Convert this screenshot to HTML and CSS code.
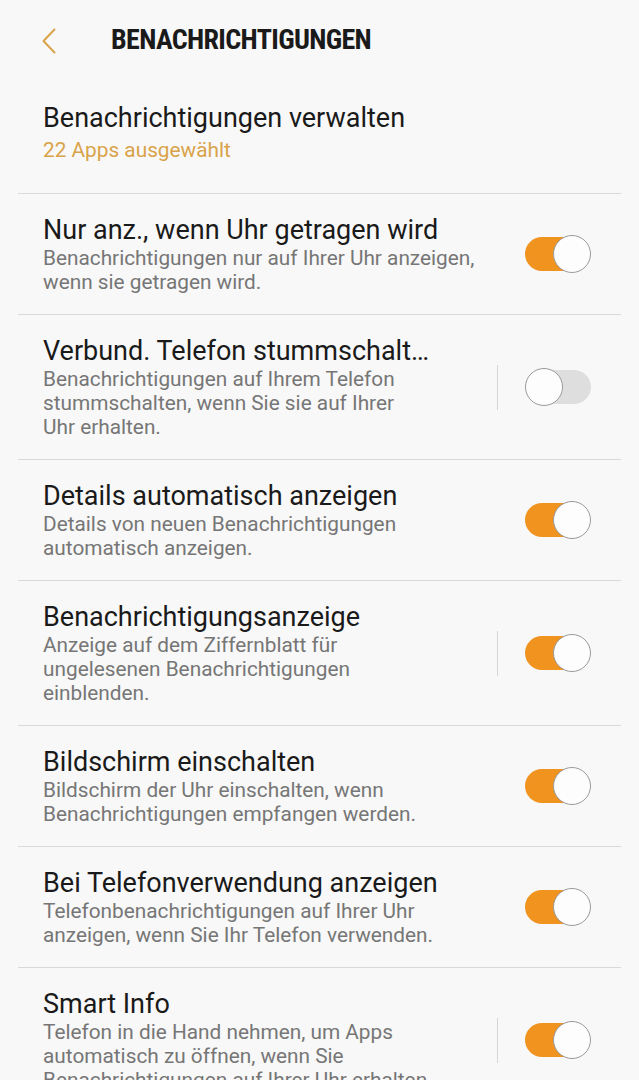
FILE: index.html
```html
<!DOCTYPE html>
<html lang="de">
<head>
<meta charset="utf-8">
<title>Benachrichtigungen</title>
<link rel="stylesheet" href="styles.css">
</head>
<body>
<div class="screen">
  <header class="appbar">
    <span class="back" aria-label="Zurück">
      <svg width="16" height="26" viewBox="0 0 16 26"><polyline points="13.5,1.5 2.5,13 13.5,24.5" fill="none" stroke="#d9a34a" stroke-width="2" stroke-linecap="round" stroke-linejoin="round"/></svg>
    </span>
    <h1 class="appbar-title">BENACHRICHTIGUNGEN</h1>
  </header>

  <ul class="list">
    <li class="row row-first">
      <div class="text">
        <div class="title">Benachrichtigungen verwalten</div>
        <div class="sub sub-accent">22 Apps ausgewählt</div>
      </div>
    </li>
    <li class="row">
      <div class="text">
        <div class="title">Nur anz., wenn Uhr getragen wird</div>
        <div class="sub">Benachrichtigungen nur auf Ihrer Uhr anzeigen,<br>wenn sie getragen wird.</div>
      </div>
      <span class="switch on"><span class="track"></span><span class="thumb"></span></span>
    </li>
    <li class="row">
      <div class="text">
        <div class="title">Verbund. Telefon stummschalt…</div>
        <div class="sub">Benachrichtigungen auf Ihrem Telefon<br>stummschalten, wenn Sie sie auf Ihrer<br>Uhr erhalten.</div>
      </div>
      <span class="vsep"></span>
      <span class="switch off"><span class="track"></span><span class="thumb"></span></span>
    </li>
    <li class="row">
      <div class="text">
        <div class="title">Details automatisch anzeigen</div>
        <div class="sub">Details von neuen Benachrichtigungen<br>automatisch anzeigen.</div>
      </div>
      <span class="switch on"><span class="track"></span><span class="thumb"></span></span>
    </li>
    <li class="row">
      <div class="text">
        <div class="title">Benachrichtigungsanzeige</div>
        <div class="sub">Anzeige auf dem Ziffernblatt für<br>ungelesenen Benachrichtigungen<br>einblenden.</div>
      </div>
      <span class="vsep"></span>
      <span class="switch on"><span class="track"></span><span class="thumb"></span></span>
    </li>
    <li class="row">
      <div class="text">
        <div class="title">Bildschirm einschalten</div>
        <div class="sub">Bildschirm der Uhr einschalten, wenn<br>Benachrichtigungen empfangen werden.</div>
      </div>
      <span class="switch on"><span class="track"></span><span class="thumb"></span></span>
    </li>
    <li class="row">
      <div class="text">
        <div class="title">Bei Telefonverwendung anzeigen</div>
        <div class="sub">Telefonbenachrichtigungen auf Ihrer Uhr<br>anzeigen, wenn Sie Ihr Telefon verwenden.</div>
      </div>
      <span class="switch on"><span class="track"></span><span class="thumb"></span></span>
    </li>
    <li class="row">
      <div class="text">
        <div class="title">Smart Info</div>
        <div class="sub">Telefon in die Hand nehmen, um Apps<br>automatisch zu öffnen, wenn Sie<br>Benachrichtigungen auf Ihrer Uhr erhalten.</div>
      </div>
      <span class="vsep"></span>
      <span class="switch on"><span class="track"></span><span class="thumb"></span></span>
    </li>
  </ul>
</div>
</body>
</html>
```

FILE: styles.css
```css
* { box-sizing: border-box; }
html, body { margin: 0; padding: 0; background: #f8f8f8; }
body {
  font-family: Roboto, "Noto Sans", "Liberation Sans", sans-serif;
  color: #1c1c1c;
  overflow: hidden;
}
.screen { width: 639px; }

.appbar {
  height: 80px;
  display: flex;
  align-items: center;
  padding-left: 41px;
}
.back { display: flex; width: 16px; height: 26px; margin-top: 1px; }
.appbar-title {
  margin: 0 0 0 54px;
  font-size: 28px;
  line-height: 32px;
  font-weight: 700;
  font-stretch: condensed;
  letter-spacing: -0.65px;
  color: #1a1a1a;
}

.list { list-style: none; margin: 0; padding: 0; }
.row {
  display: flex;
  align-items: center;
  margin: 0 18px;
  padding: 20px 30px 20px 25px;
  border-bottom: 1px solid #d9d9d9;
}
.row-first { padding-top: 22px; padding-bottom: 31px; }
.text { flex: 1; min-width: 0; }
.title {
  font-size: 27px;
  line-height: 32px;
  color: #1a1a1a;
  white-space: nowrap;
}
.sub {
  font-size: 20.8px;
  line-height: 24px;
  color: #767676;
}
.sub-accent { color: #d9a34a; margin-top: 4px; }

.vsep {
  width: 1px;
  height: 45px;
  background: #d6d6d6;
  margin-right: 27px;
}
.switch {
  position: relative;
  flex: none;
  width: 66px;
  height: 38px;
}
.track {
  position: absolute;
  top: 2px;
  height: 34px;
  border-radius: 17px;
}
.thumb {
  position: absolute;
  top: 0;
  width: 38px;
  height: 38px;
  border-radius: 50%;
  background: #fdfdfd;
  border: 1px solid #9a9a9a;
}
.switch.on .track { left: 0; width: 62px; background: #f0931f; }
.switch.on .thumb { right: 0; }
.switch.off .track { right: 0; width: 63px; background: #dedede; }
.switch.off .thumb { left: 0; }
```
